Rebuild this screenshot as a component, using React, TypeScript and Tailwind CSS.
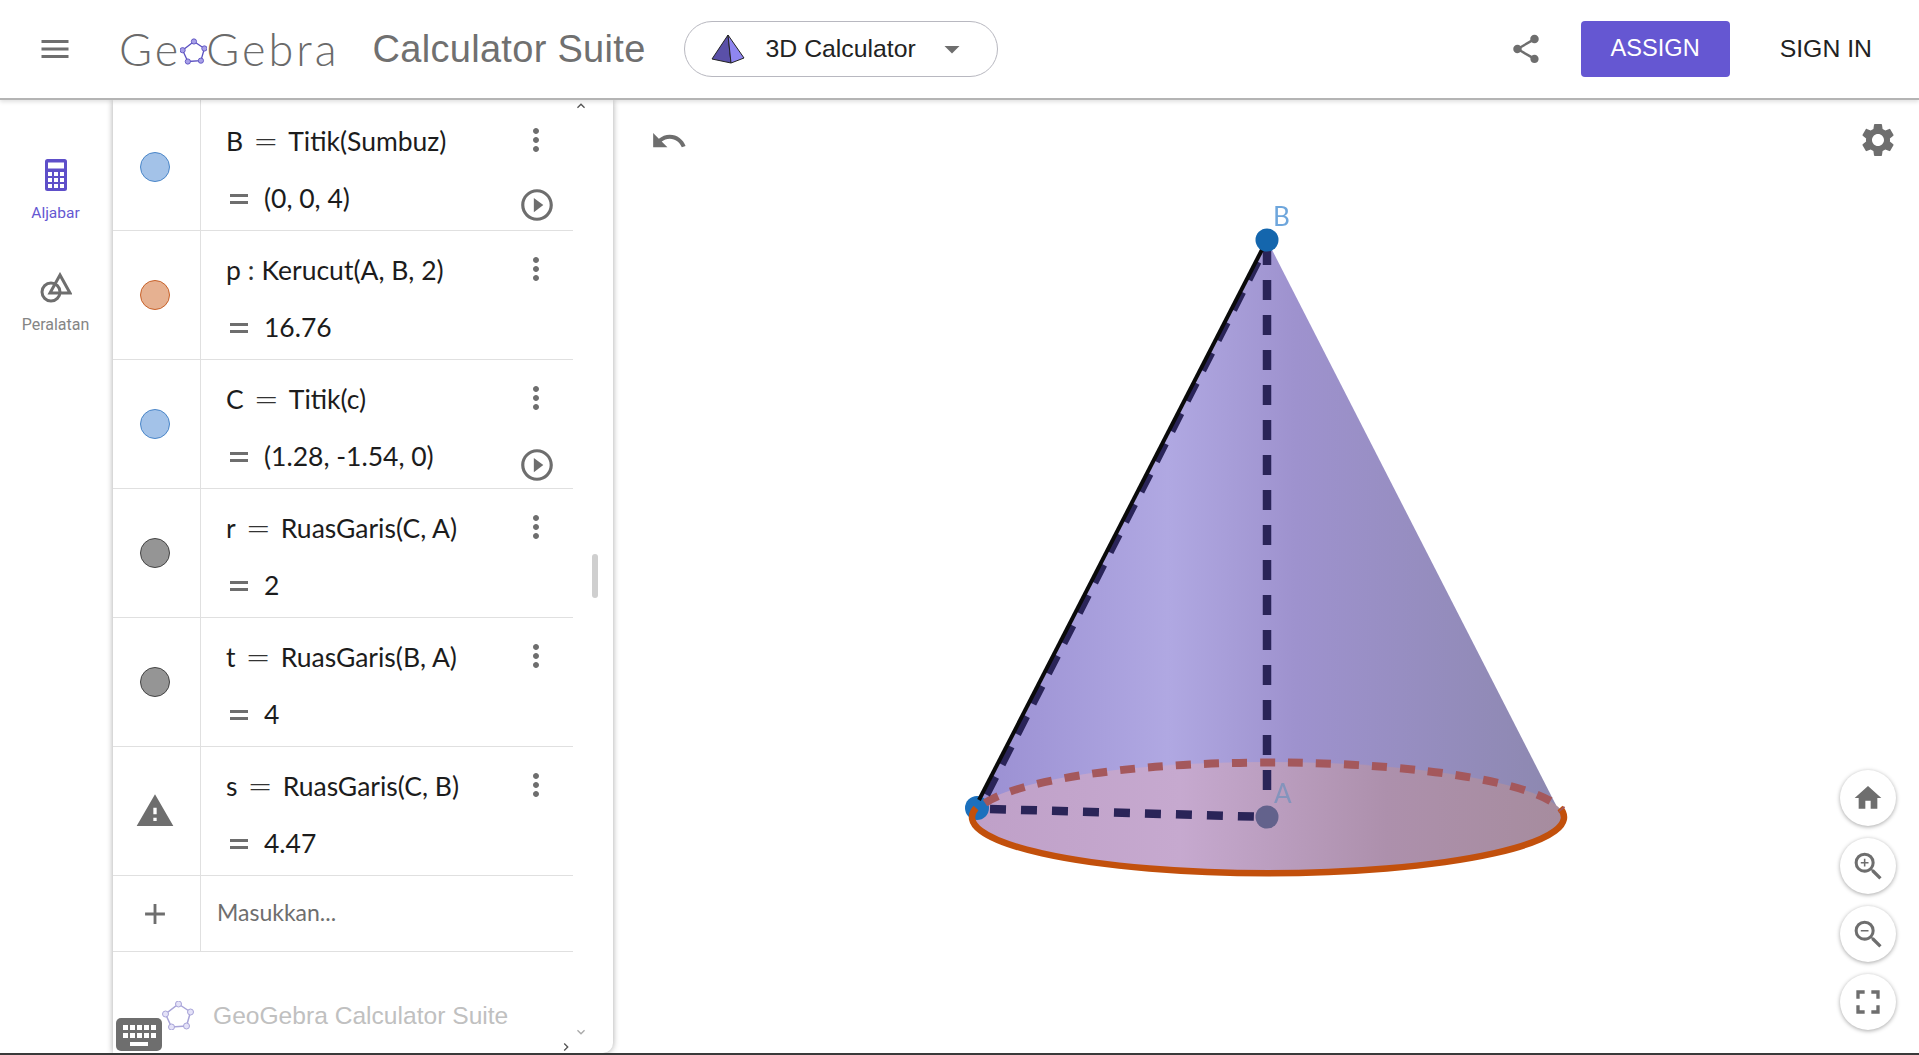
import { MdAdd, MdArrowDropDown, MdFullscreen, MdHome, MdKeyboardArrowDown, MdKeyboardArrowUp, MdMenu, MdMoreVert, MdOutlineKeyboardArrowRight, MdPlayCircleOutline, MdSettings, MdShare, MdUndo, MdWarning, MdZoomIn, MdZoomOut } from "react-icons/md";

const rows = [
  { name: "B", op: "=", expr: "Titik(Sumbuz)", value: "(0, 0, 4)", marble: "bg-[#a3c2e8] border-[#4a86c8]", play: true },
  { name: "p", op: ":", expr: "Kerucut(A, B, 2)", value: "16.76", marble: "bg-[#e6b191] border-[#c8622a]" },
  { name: "C", op: "=", expr: "Titik(c)", value: "(1.28, -1.54, 0)", marble: "bg-[#a3c2e8] border-[#4a86c8]", play: true },
  { name: "r", op: "=", expr: "RuasGaris(C, A)", value: "2", marble: "bg-[#959595] border-[#444444]" },
  { name: "t", op: "=", expr: "RuasGaris(B, A)", value: "4", marble: "bg-[#959595] border-[#444444]" },
  { name: "s", op: "=", expr: "RuasGaris(C, B)", value: "4.47", warning: true },
];

function Pentagon({ className, fill, stroke }: { className?: string; fill: string; stroke: string }) {
  const pts = [
    [16, 3],
    [28, 11],
    [24, 25],
    [9, 26],
    [3, 13],
  ];
  return (
    <svg viewBox="0 0 31 29" className={className}>
      <polygon points={pts.map((p) => p.join(",")).join(" ")} fill="none" stroke={stroke} strokeWidth="1.5" />
      {pts.map((p) => (
        <circle key={p[0]} cx={p[0]} cy={p[1]} r="3" fill={fill} stroke={stroke} strokeWidth="1" />
      ))}
    </svg>
  );
}

function Header() {
  return (
    <header className="relative z-10 flex h-[100px] shrink-0 items-center border-b-2 border-[#b4b4b4] bg-white pl-[37px] pr-[47px] shadow-[0_2px_4px_rgba(0,0,0,0.12)]">
      <MdMenu className="text-[36px] text-[#6e6e6e]" />
      <div className="ml-[46px] flex items-center font-['Lato',sans-serif] text-[45px] font-light leading-none tracking-[3px] text-[#6a6a6a]">
        Ge
        <Pentagon className="mx-[-1px] mt-[4px] h-[27px] w-[27px]" fill="#a8a0e8" stroke="#5a50c0" />
        Gebra
      </div>
      <span className="ml-[33px] font-['Liberation_Sans',sans-serif] text-[38px] leading-none tracking-[0.3px] text-[#707070]">
        Calculator Suite
      </span>
      <button className="ml-[38px] flex h-[56px] w-[314px] items-center rounded-[28px] border border-[#b8b8c0] pl-[26px] font-['Liberation_Sans',sans-serif] text-[24.8px] text-[#222222]">
        <svg viewBox="0 0 34 30" className="h-[30px] w-[34px]">
          <polygon points="17,1 1,25 20,29" fill="#5a50a8" stroke="#222" strokeWidth="1" />
          <polygon points="17,1 33,24 20,29" fill="#8f86f0" stroke="#222" strokeWidth="1" />
        </svg>
        <span className="ml-[21px]">3D Calculator</span>
        <MdArrowDropDown className="ml-[18px] text-[36px] text-[#6e6e6e]" />
      </button>
      <MdShare className="ml-auto text-[34px] text-[#6e6e6e]" />
      <button className="ml-[38px] h-[56px] w-[149px] rounded-[4px] bg-[#6557d2] font-['Liberation_Sans',sans-serif] text-[23.6px] text-white">
        ASSIGN
      </button>
      <span className="ml-[50px] font-['Liberation_Sans',sans-serif] text-[24.8px] text-[#222222]">SIGN IN</span>
    </header>
  );
}

function Sidebar() {
  return (
    <nav className="flex w-[113px] shrink-0 flex-col items-center bg-white pr-[2px] pt-[59px] font-['Roboto',sans-serif]">
      <svg viewBox="0 0 22 32" className="h-[32px] w-[22px]">
        <rect width="22" height="32" rx="2.5" fill="#5e4fc9" />
        <rect x="3" y="3.5" width="16" height="6" fill="#fff" />
        {[13, 19, 25].map((y) =>
          [3, 9, 15].map((x) => <rect key={x + "-" + y} x={x} y={y} width="4" height="4" fill="#fff" />),
        )}
      </svg>
      <span className="mt-[13px] text-[15.5px] leading-[18px] text-[#6557d2]">Aljabar</span>
      <svg viewBox="0 0 32 32" className="mt-[50px] h-[32px] w-[32px]" fill="none" stroke="#6e6e6e" strokeWidth="3">
        <circle cx="11" cy="20" r="9" />
        <polygon points="20,3 30,21 10,21" />
      </svg>
      <span className="mt-[12px] text-[16px] leading-[18px] text-[#858585]">Peralatan</span>
    </nav>
  );
}

function AlgebraRow({ row, first }: { row: (typeof rows)[number]; first: boolean }) {
  return (
    <div className={first ? "flex h-[131px] border-b border-[#e0e0e0]" : "flex h-[129px] border-b border-[#e0e0e0]"}>
      <div className={first ? "flex w-[88px] items-center justify-center border-r border-[#e0e0e0] pr-[3px] pt-[4px]" : "flex w-[88px] items-center justify-center border-r border-[#e0e0e0] pr-[3px]"}>
        {row.warning ? (
          <MdWarning className="text-[40px] text-[#6e6e6e]" />
        ) : (
          <span className={"h-[30px] w-[30px] rounded-full border " + row.marble} />
        )}
      </div>
      <div className={first ? "relative flex-1 pl-[25px] pt-[13px] text-[26.5px] text-[#1c1c1c]" : "relative flex-1 pl-[25px] pt-[11px] text-[26.5px] text-[#1c1c1c]"}>
        {row.op === ":" ? (
          <div className="flex h-[57px] items-center gap-[7px] leading-none">
            <span>{row.name}</span>
            <span className="text-[#333333]">:</span>
            <span>{row.expr}</span>
          </div>
        ) : (
          <div className="flex h-[57px] items-center gap-[10px] leading-none">
            <span>{row.name}</span>
            <span className="font-['DejaVu_Sans',sans-serif] text-[30px] font-extralight text-[#333333]">=</span>
            <span>{row.expr}</span>
          </div>
        )}
        <div className="flex h-[57px] items-center gap-[16px] pl-[4px] leading-none">
          <span className="flex w-[18px] flex-col gap-[4px]">
            <span className="h-[3px] bg-[#6e6e6e]" />
            <span className="h-[3px] bg-[#6e6e6e]" />
          </span>
          <span>{row.value}</span>
        </div>
        <MdMoreVert className={first ? "absolute right-[19px] top-[22px] text-[36px] text-[#6e6e6e]" : "absolute right-[19px] top-[20px] text-[36px] text-[#6e6e6e]"} />
        {row.play && <MdPlayCircleOutline className="absolute right-[17px] top-[86px] text-[38px] text-[#6e6e6e]" />}
      </div>
    </div>
  );
}

function KeyboardTab() {
  return (
    <svg viewBox="0 0 46 33" className="absolute bottom-[2px] left-[3px] h-[33px] w-[46px]">
      <path d="M0 5a5 5 0 0 1 5-5h36a5 5 0 0 1 5 5v23a5 5 0 0 1-5 5H5a5 5 0 0 1-5-5z" fill="#6e6e6e" />
      {[7, 14, 21, 28, 35].map((x) => (
        <g key={x} fill="#fff">
          <rect x={x} y="7" width="5" height="5" />
          <rect x={x} y="15" width="5" height="5" />
        </g>
      ))}
      <rect x="14" y="24" width="18" height="4" fill="#fff" />
    </svg>
  );
}

function AlgebraPanel() {
  return (
    <section className="relative z-[1] flex w-[500px] shrink-0 flex-col overflow-hidden rounded-br-[10px] bg-white shadow-[0_0_6px_rgba(0,0,0,0.35)]">
      <div className="w-[460px]">
        {rows.map((row, i) => (
          <AlgebraRow key={row.name} row={row} first={i === 0} />
        ))}
        <div className="flex h-[76px] border-b border-[#e0e0e0]">
          <div className="flex w-[88px] items-center justify-center border-r border-[#e0e0e0] pr-[3px]">
            <MdAdd className="text-[34px] text-[#6e6e6e]" />
          </div>
          <span className="flex items-center pb-[3px] pl-[16px] font-['Lato',sans-serif] text-[23px] text-[#6e6e6e]">Masukkan...</span>
        </div>
      </div>
      <div className="ml-[49px] mt-[46px] flex items-center gap-[19px] font-['Liberation_Sans',sans-serif] text-[24.6px] text-[#c0c0c0]">
        <Pentagon className="h-[29px] w-[32px] -translate-y-[1px]" fill="#e4e2f8" stroke="#a8a4d8" />
        GeoGebra Calculator Suite
      </div>
      <MdKeyboardArrowUp className="absolute left-[460px] top-[-2px] text-[16px] text-[#555555]" />
      <MdKeyboardArrowDown className="absolute left-[460px] top-[924px] text-[16px] text-[#aaaaaa]" />
      <span className="absolute left-[479px] top-[454px] h-[44px] w-[6px] rounded-[3px] bg-[#cfcfcf]" />
      <MdOutlineKeyboardArrowRight className="absolute left-[445px] top-[939px] text-[16px] text-[#555555]" />
      <KeyboardTab />
    </section>
  );
}

function Cone() {
  return (
    <svg className="absolute inset-0 h-full w-full blur-[0.5px]" viewBox="613 100 1306 953">
      <defs>
        <linearGradient id="side" x1="0" x2="1" y1="0" y2="0">
          <stop offset="0" stopColor="#9a8fd2" />
          <stop offset="0.33" stopColor="#b0a8e2" />
          <stop offset="0.55" stopColor="#9e92ce" />
          <stop offset="1" stopColor="#8d88b0" />
        </linearGradient>
        <linearGradient id="base" x1="0" x2="1" y1="0" y2="0">
          <stop offset="0" stopColor="#bfa0c8" />
          <stop offset="0.35" stopColor="#c6a9cf" />
          <stop offset="0.7" stopColor="#ad90ac" />
          <stop offset="1" stopColor="#a68c9e" />
        </linearGradient>
      </defs>
      <polygon points="1267,240 977,805 1556,805" fill="url(#side)" />
      <ellipse cx="1268" cy="818" rx="296" ry="56" fill="url(#base)" />
      <circle cx="977" cy="808" r="12" fill="#1b70bd" />
      <path d="M976 808 A296 56 0 1 0 1560 808" fill="none" stroke="#c2500c" strokeWidth="6.5" />
      <path d="M985 803 A296 56 0 0 1 1562 810" fill="none" stroke="#a4585c" strokeWidth="8" strokeDasharray="15 13" />
      <line x1="1267" y1="245" x2="1267" y2="805" stroke="#2a2458" strokeWidth="8.5" strokeDasharray="20 15" />
      <line x1="990" y1="809" x2="1267" y2="817" stroke="#2a2458" strokeWidth="8.5" strokeDasharray="16 15" />
      <line x1="987" y1="795" x2="1267" y2="245" stroke="#2a2458" strokeWidth="6.5" strokeDasharray="20 14" />
      <line x1="979" y1="800" x2="1267" y2="240" stroke="#0a0a0a" strokeWidth="4" />
      <circle cx="1267" cy="817" r="11.5" fill="#63628c" />
      <circle cx="1267" cy="240" r="11.5" fill="#1466ad" />
      <text x="1273" y="226" fontFamily="Lato, sans-serif" fontSize="26" fill="#6ea6dc">B</text>
      <text x="1274" y="803" fontFamily="Lato, sans-serif" fontSize="26" fill="#8494bc">A</text>
    </svg>
  );
}

function RoundButton({ children, size }: { children: React.ReactNode; size: string }) {
  return (
    <button className={"flex h-[56px] w-[56px] items-center justify-center rounded-full bg-white text-[#6e6e6e] shadow-[0_1px_4px_rgba(0,0,0,0.35)] " + size}>
      {children}
    </button>
  );
}

function Canvas() {
  return (
    <main className="relative flex-1 bg-white">
      <Cone />
      <MdUndo className="absolute left-[37px] top-[22px] text-[38px] text-[#6e6e6e]" />
      <MdSettings className="absolute right-[21px] top-[20px] text-[40px] text-[#6e6e6e]" />
      <div className="absolute right-[23px] top-[670px] flex flex-col gap-[12px]">
        <RoundButton size="text-[32px]"><MdHome /></RoundButton>
        <RoundButton size="text-[37px]"><MdZoomIn /></RoundButton>
        <RoundButton size="text-[37px]"><MdZoomOut /></RoundButton>
        <RoundButton size="text-[40px]"><MdFullscreen /></RoundButton>
      </div>
    </main>
  );
}

export default function App() {
  return (
    <div className="flex h-[1055px] flex-col overflow-hidden border-b-2 border-[#3a3a3a] bg-white font-['Lato',sans-serif]">
      <Header />
      <div className="flex min-h-0 flex-1">
        <Sidebar />
        <AlgebraPanel />
        <Canvas />
      </div>
    </div>
  );
}
